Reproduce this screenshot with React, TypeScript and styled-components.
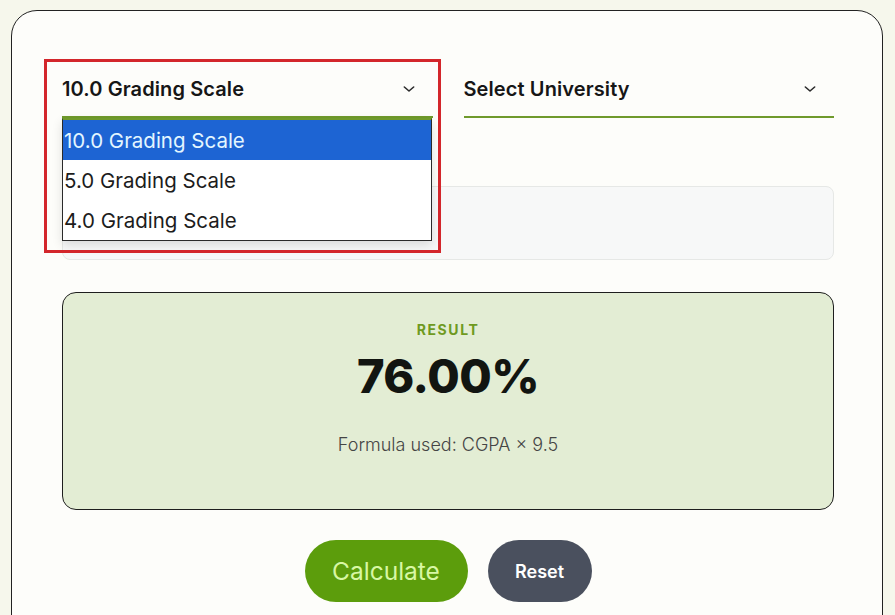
import React from "react";
import styled, { createGlobalStyle } from "styled-components";

const Global = createGlobalStyle`
  html, body {
    margin: 0;
    padding: 0;
    background: #f6f7ec;
    font-family: "Inter", "Liberation Sans", sans-serif;
  }
  * { box-sizing: border-box; }
`;

const Page = styled.div`
  height: 615px;
  overflow: hidden;
  padding: 10px 12px 0 11px;
`;

const Card = styled.section`
  background: #fdfdfa;
  border: 1px solid #222;
  border-radius: 26px;
  padding: 48px 48px 60px 50px;
  display: flex;
  flex-direction: column;
`;

const SelectRow = styled.div`
  display: grid;
  grid-template-columns: 1fr 1fr;
  column-gap: 31px;
`;

const Field = styled.div`
  position: relative;
`;

const SelectBox = styled.div`
  height: 59px;
  display: flex;
  align-items: center;
  justify-content: space-between;
  padding: 2px 16px 0 0;
  border-bottom: 2px solid #6f9a2c;
  font-size: 20px;
  font-weight: 600;
  color: #161616;
  letter-spacing: 0.1px;
`;

const Highlight = styled.div`
  position: absolute;
  left: -18px;
  top: 0;
  width: 397px;
  height: 194px;
  border: 3px solid #d3262b;
  pointer-events: none;
  z-index: 3;
`;

const OptionList = styled.ul`
  position: absolute;
  left: 0;
  top: 59px;
  width: 370px;
  margin: 0;
  padding: 0;
  list-style: none;
  background: #fff;
  border: 1px solid #2a2a2a;
  border-top: 2px solid #6f9a2c;
  box-shadow: 0 4px 10px rgba(0, 0, 0, 0.12);
  z-index: 2;
`;

const Option = styled.li<{ $active?: boolean }>`
  height: 40px;
  display: flex;
  align-items: center;
  padding-left: 1px;
  font-size: 20.5px;
  font-weight: 400;
  color: ${(p) => (p.$active ? "#e3f6ff" : "#1c1c1c")};
  background: ${(p) => (p.$active ? "#1d64d3" : "transparent")};
`;

const InputBox = styled.div`
  margin-top: 68px;
  height: 74px;
  background: #f7f8f8;
  border: 1px solid #e6e8e6;
  border-radius: 8px;
`;

const ResultBox = styled.div`
  margin-top: 32px;
  height: 218px;
  background: #e3edd4;
  border: 1px solid #1e1e1e;
  border-radius: 14px;
  display: flex;
  flex-direction: column;
  align-items: center;
  padding-top: 28px;
`;

const ResultLabel = styled.div`
  font-size: 14px;
  font-weight: 700;
  letter-spacing: 1.6px;
  color: #6f9a1f;
`;

const ResultValue = styled.div`
  margin-top: 9px;
  font-size: 47px;
  font-weight: 800;
  color: #121511;
  letter-spacing: -0.5px;
`;

const Formula = styled.div`
  margin-top: 30px;
  font-size: 18px;
  font-weight: 300;
  color: #454545;
`;

const Actions = styled.div`
  margin-top: 30px;
  display: flex;
  justify-content: center;
  gap: 20px;
`;

const Button = styled.button<{ $tone: "go" | "muted" }>`
  height: 62px;
  border: none;
  border-radius: 31px;
  font-family: inherit;
  cursor: pointer;
  padding: 0 20px;
  font-size: ${(p) => (p.$tone === "go" ? "24.5px" : "18px")};
  font-weight: ${(p) => (p.$tone === "go" ? 400 : 600)};
  color: ${(p) => (p.$tone === "go" ? "#d8f7a4" : "#ffffff")};
  background: ${(p) => (p.$tone === "go" ? "#5c9d0c" : "#4a505e")};
  min-width: ${(p) => (p.$tone === "go" ? "163px" : "104px")};
`;

const Chevron = () => (
  <svg width="16" height="16" viewBox="0 0 24 24" fill="none" stroke="#2b2b2b" strokeWidth="2.4" strokeLinecap="round" strokeLinejoin="round">
    <path d="M5 9l7 6 7-6" />
  </svg>
);

const scales = ["10.0 Grading Scale", "5.0 Grading Scale", "4.0 Grading Scale"];

export default function App() {
  return (
    <>
      <Global />
      <Page>
        <Card>
          <SelectRow>
            <Field>
              <SelectBox>
                <span>10.0 Grading Scale</span>
                <Chevron />
              </SelectBox>
              <OptionList>
                {scales.map((s, i) => (
                  <Option key={s} $active={i === 0}>
                    {s}
                  </Option>
                ))}
              </OptionList>
              <Highlight />
            </Field>
            <Field>
              <SelectBox>
                <span>Select University</span>
                <Chevron />
              </SelectBox>
            </Field>
          </SelectRow>
          <InputBox />
          <ResultBox>
            <ResultLabel>RESULT</ResultLabel>
            <ResultValue>76.00%</ResultValue>
            <Formula>Formula used: CGPA × 9.5</Formula>
          </ResultBox>
          <Actions>
            <Button $tone="go">Calculate</Button>
            <Button $tone="muted">Reset</Button>
          </Actions>
        </Card>
      </Page>
    </>
  );
}
